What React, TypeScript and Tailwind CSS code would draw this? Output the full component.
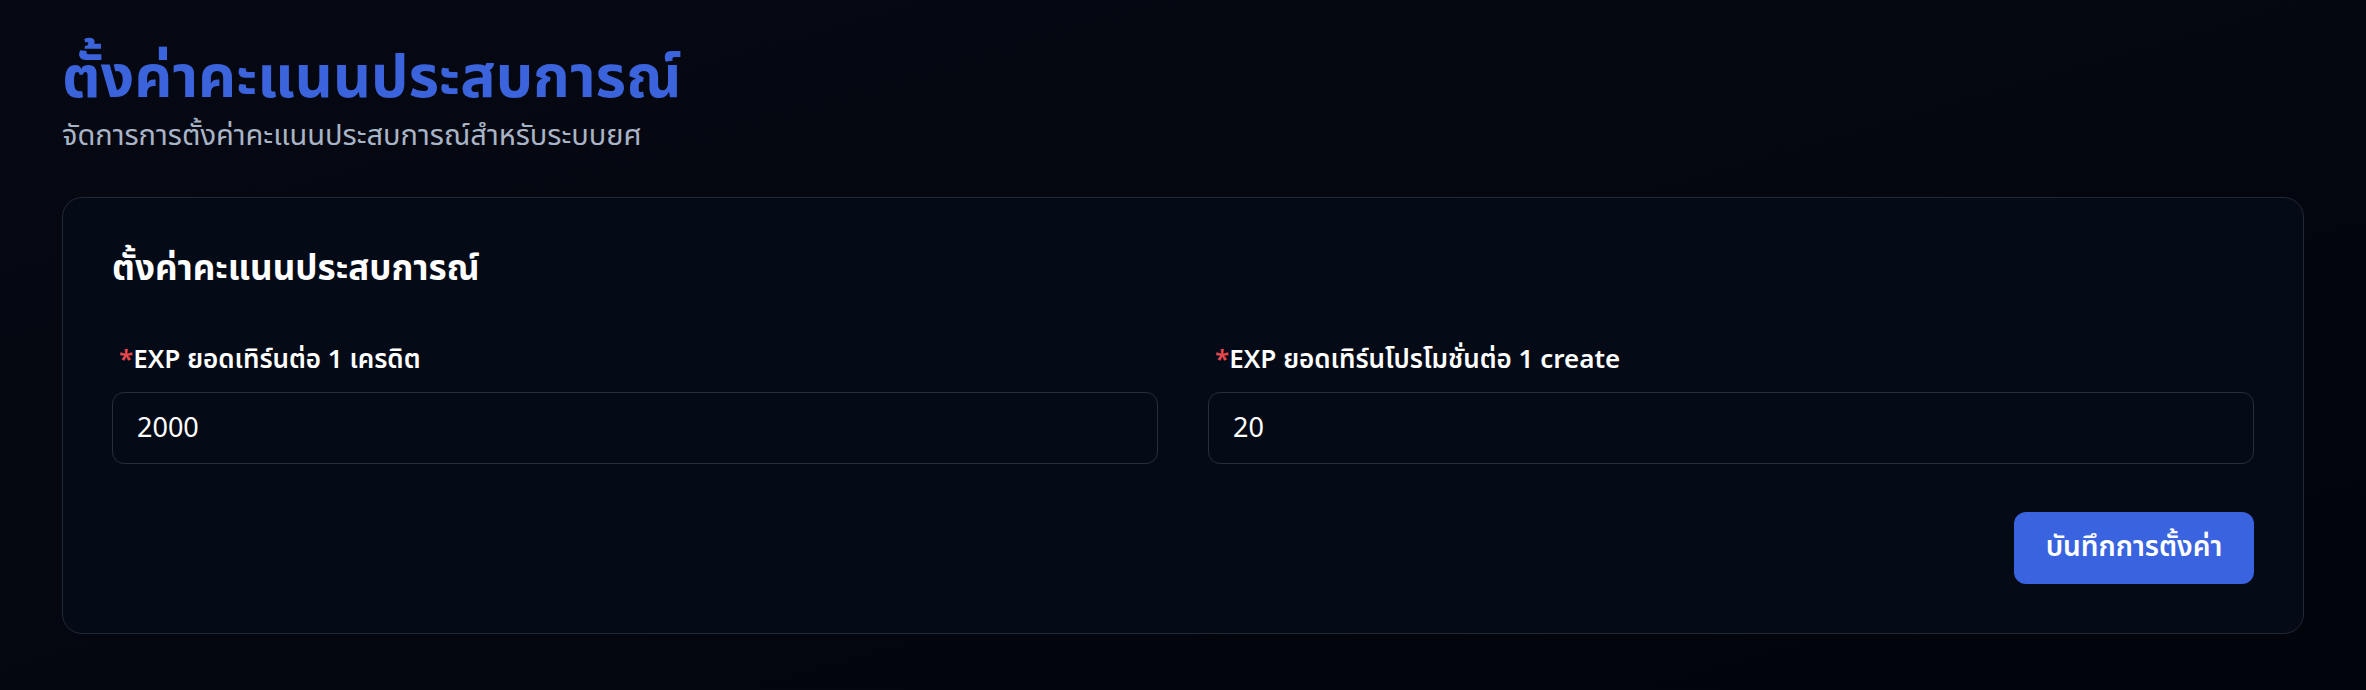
export default function App() {
  return (
    <div
      className="min-h-screen w-full bg-gradient-to-br from-[#060913] via-[#04070f] to-[#02040b] px-[62px] pt-[46px] pb-[52px]"
      style={{ fontFamily: '"Noto Sans Thai", "Noto Sans", "Open Sans", sans-serif' }}
    >
      {/* page heading */}
      <h1 className="text-[59px] font-bold leading-[1.15] text-[#3a63dc]">ตั้งค่าคะแนนประสบการณ์</h1>
      <p className="mt-[4px] text-[29px] leading-[1.3] text-[#aab4c7]">จัดการการตั้งค่าคะแนนประสบการณ์สำหรับระบบยศ</p>

      <div className="mt-[41px] rounded-[20px] border border-[#222836] bg-[#050a17] p-[49px]">
        <h2 className="text-[35px] font-bold leading-[1.3] text-white">ตั้งค่าคะแนนประสบการณ์</h2>

        <div className="mt-[50px] grid grid-cols-2 gap-[50px]">
          <div className="flex flex-col">
            <label className="ml-[7px] text-[26px] font-semibold leading-[1.4] text-white">
              <span className="text-[#e5484d]">*</span>EXP ยอดเทิร์นต่อ 1 เครดิต
            </label>
            <input
              defaultValue="2000"
              className="mt-[14px] h-[72px] rounded-[12px] border border-[#272d3b] bg-transparent px-[24px] text-[27px] text-white outline-none"
            />
          </div>
          <div className="flex flex-col">
            <label className="ml-[7px] text-[26px] font-semibold leading-[1.4] text-white">
              <span className="text-[#e5484d]">*</span>EXP ยอดเทิร์นโปรโมชั่นต่อ 1 create
            </label>
            <input
              defaultValue="20"
              className="mt-[14px] h-[72px] rounded-[12px] border border-[#272d3b] bg-transparent px-[24px] text-[27px] text-white outline-none"
            />
          </div>
        </div>

        <div className="mt-[48px] flex justify-end">
          <button className="h-[72px] w-[240px] rounded-[12px] bg-[#3a63e0] text-[28px] font-semibold text-white">
            บันทึกการตั้งค่า
          </button>
        </div>
      </div>
    </div>
  );
}
